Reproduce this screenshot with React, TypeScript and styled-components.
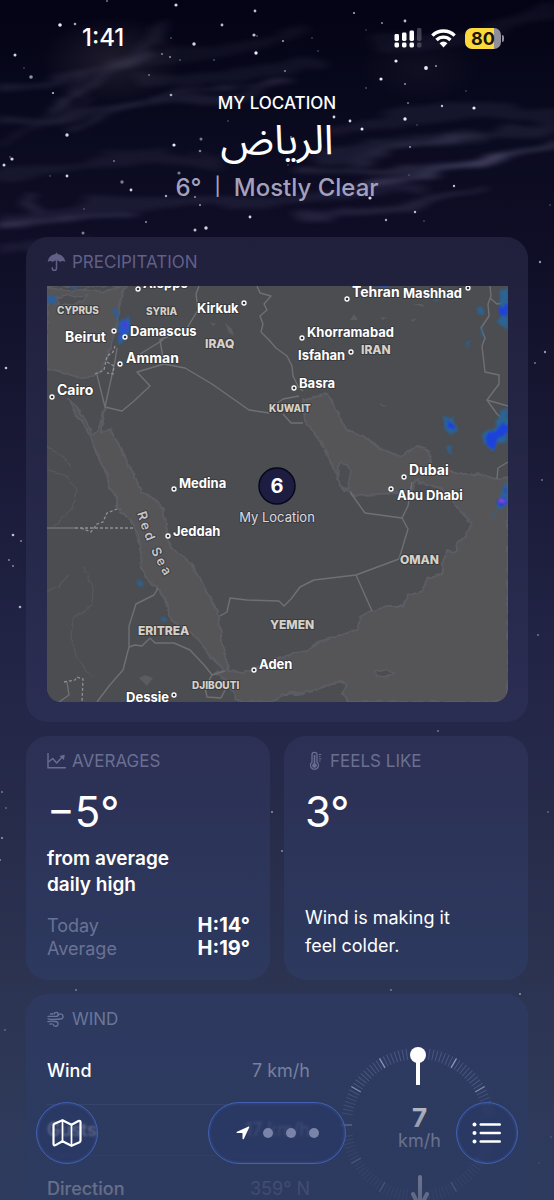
import React from "react";
import styled, { createGlobalStyle } from "styled-components";

const GlobalStyle = createGlobalStyle`
  *, *::before, *::after { box-sizing: border-box; }
  html, body { margin: 0; background: #050416; }
  body {
    font-family: Inter, "Noto Sans Arabic", "DejaVu Sans", sans-serif;
    color: #fff;
    -webkit-font-smoothing: antialiased;
  }
  h1, h2, p, dl, dd, dt { margin: 0; font-weight: inherit; }
`;

const Screen = styled.div`
  position: relative;
  height: 100vh;
  overflow: hidden;
  background: linear-gradient(
    180deg,
    #040315 0%,
    #09091e 9%,
    #0e0d25 19%,
    #171733 34%,
    #222446 54%,
    #272b4a 68%,
    #2c3553 84%,
    #303c5c 100%
  );
`;

const Sky = styled.svg`
  position: absolute;
  top: 0;
  left: 0;
  width: 100%;
  height: 100%;
`;

const Scroller = styled.main`
  position: relative;
  height: 100%;
  overflow-y: auto;
  scrollbar-width: none;
  padding: 0 26px;
`;

const StatusBar = styled.div`
  display: flex;
  justify-content: space-between;
  align-items: center;
  height: 44px;
  margin-top: 16px;
  padding: 0 24px 0 56px;
`;

const Clock = styled.time`
  font-size: 24px;
  line-height: 28px;
  font-weight: 500;
`;

const StatusIcons = styled.div`
  display: flex;
  align-items: center;
  gap: 9px;
`;

const Battery = styled.div`
  display: flex;
  align-items: center;
  gap: 1px;
`;

const BatteryBody = styled.div`
  width: 36px;
  height: 21px;
  border-radius: 7px;
  background: linear-gradient(90deg, #fbd93d 80%, #8f8e99 80%);
  color: #1a1505;
  font-size: 18px;
  line-height: 21px;
  font-weight: 700;
  text-align: center;
`;

const BatteryTip = styled.span`
  width: 2px;
  height: 7px;
  border-radius: 0 2px 2px 0;
  background: #8f8e99;
`;

const Header = styled.header`
  display: flex;
  flex-direction: column;
  align-items: center;
  padding-top: 32px;
  height: 177px;
`;

const Eyebrow = styled.p`
  font-size: 17px;
  line-height: 22px;
  font-weight: 500;
`;

const City = styled.h1`
  font-size: 41px;
  line-height: 56px;
  height: 56px;
  margin-top: -3px;
  font-weight: 400;
`;

const Summary = styled.p`
  display: flex;
  gap: 13px;
  margin-top: 4px;
  font-size: 24px;
  line-height: 34px;
  font-weight: 500;
  color: #a3a1bd;
`;

const Divider = styled.span`
  font-size: 18px;
  line-height: 32px;
`;

const Cards = styled.div`
  display: flex;
  flex-direction: column;
  gap: 14px;
  padding-bottom: 120px;
`;

const CardPair = styled.div`
  display: grid;
  grid-template-columns: 1fr 1fr;
  gap: 14px;
`;

const Card = styled.section<{ $from: string; $to: string }>`
  display: flex;
  flex-direction: column;
  padding: 13px 20px 20px 21px;
  border-radius: 22px;
  background: linear-gradient(180deg, ${(p) => p.$from}, ${(p) => p.$to});
`;

const CardTitle = styled.h2<{ $tint?: string }>`
  display: flex;
  align-items: center;
  gap: 6px;
  height: 24px;
  font-size: 17px;
  line-height: 24px;
  font-weight: 400;
  color: ${(p) => p.$tint ?? "#6a6f92"};
`;

const MapFrame = styled.div`
  margin-top: 12px;
  border-radius: 0 0 14px 14px;
  overflow: hidden;
  background: #4c4d51;
  svg { display: block; width: 100%; height: auto; }
`;

const Reading = styled.p`
  margin-top: 13px;
  font-size: 42px;
  line-height: 52px;
`;

const Statement = styled.p`
  margin-top: 8px;
  font-size: 19px;
  line-height: 26px;
  font-weight: 600;
`;

const Comparison = styled.dl`
  display: grid;
  grid-template-columns: 1fr auto;
  margin-top: 16px;
  font-size: 18px;
  line-height: 23px;
  dt { color: #6a7294; }
  dd { font-size: 20px; font-weight: 700; }
`;

const Remark = styled.p`
  margin-top: auto;
  font-size: 18px;
  line-height: 28px;
  max-width: 180px;
`;

const WindBody = styled.div`
  display: grid;
  grid-template-columns: minmax(0, 1fr) 156px;
  column-gap: 30px;
  align-items: start;
  padding-right: 12px;
`;

const WindList = styled.dl`
  margin-top: 7px;
`;

const WindRow = styled.div`
  display: flex;
  justify-content: space-between;
  align-items: center;
  height: 66px;
  font-size: 18px;
  line-height: 24px;
  &:nth-child(2) {
    height: 52px;
    border-top: 1px solid #3a4870;
    border-bottom: 1px solid #3a4870;
  }
  dt { font-weight: 500; }
  dd { color: #78809e; }
`;

const Dial = styled.div`
  position: relative;
  margin-top: 16px;
  height: 156px;
`;

const DialFace = styled.svg`
  display: block;
  width: 156px;
  height: 166px;
  overflow: visible;
`;

const DialReading = styled.p`
  position: absolute;
  inset: 58px 0 auto;
  padding-left: 3px;
  text-align: center;
  font-size: 18px;
  line-height: 20px;
  color: #bcc1d2;
`;

const DialValue = styled.strong`
  display: block;
  font-size: 26px;
  line-height: 26px;
  font-weight: 700;
  color: #fff;
`;

const BottomFade = styled.div`
  position: absolute;
  inset: auto 0 0;
  height: 118px;
  background: linear-gradient(
    180deg,
    rgba(46, 58, 94, 0) 0%,
    rgba(46, 58, 94, 0.42) 26%,
    rgba(46, 58, 94, 0.66) 60%,
    rgba(46, 58, 94, 0.76) 100%
  );
  pointer-events: none;
`;

const Toolbar = styled.nav`
  position: absolute;
  inset: auto 36px 36px;
  display: flex;
  justify-content: space-between;
`;

const GlassButton = styled.button<{ $wide?: boolean }>`
  display: flex;
  align-items: center;
  justify-content: center;
  gap: 13px;
  width: ${(p) => (p.$wide ? 138 : 62)}px;
  height: 62px;
  padding: 0;
  border: 1px solid #4261b4;
  border-radius: 31px;
  color: #fff;
  background: rgba(40, 56, 104, 0.5);
  backdrop-filter: blur(1px);
  box-shadow: inset 0 0 3px rgba(74, 108, 200, 0.55);
`;

const Dot = styled.span`
  width: 10px;
  height: 10px;
  border-radius: 50%;
  background: #7a84a8;
`;

const STARS: [number, number, number, number][] = [
  [60, 25, 1.8, 1], [75, 24, 1.3, 0.7], [176, 5, 1.6, 0.9], [107, 1, 1, 0.5], [222, 25, 1.4, 0.8],
  [255, 11, 1.4, 0.8], [254, 35, 1.6, 0.8], [257, 36, 0.8, 0.5], [194, 44, 1.7, 0.9], [256, 53, 1.7, 1],
  [283, 41, 1, 0.7], [312, 38, 0.8, 0.4], [318, 51, 0.8, 0.4], [354, 13, 1.1, 0.7], [382, 23, 1, 0.6],
  [405, 21, 1.4, 0.8], [366, 30, 0.7, 0.4], [396, 61, 1.6, 1], [426, 68, 1.9, 1], [436, 66, 1.1, 0.6],
  [381, 79, 1.6, 1], [405, 84, 1, 0.6], [366, 88, 0.8, 0.5], [285, 71, 0.9, 0.6], [171, 38, 0.8, 0.5],
  [162, 54, 0.9, 0.6], [170, 57, 1, 0.6], [180, 60, 0.8, 0.5], [214, 60, 0.8, 0.5], [149, 75, 0.9, 0.5],
  [15, 55, 1.5, 0.9], [24, 68, 0.8, 0.4], [31, 77, 1.8, 0.6], [53, 93, 1.1, 0.8], [171, 95, 1.3, 0.7],
  [334, 117, 1.4, 0.9], [350, 121, 1.4, 0.9], [362, 129, 1.5, 1], [405, 119, 1.7, 1], [408, 103, 1, 0.5],
  [442, 106, 1.2, 0.8], [474, 108, 1.6, 1], [466, 91, 0.8, 0.4], [417, 125, 0.7, 0.4], [410, 147, 1, 0.6],
  [67, 135, 1.7, 0.9], [174, 145, 1.6, 1], [201, 139, 1.5, 0.5], [200, 151, 1.3, 0.5], [228, 121, 0.8, 0.4],
  [12, 159, 1.6, 0.9], [10, 157, 0.8, 0.5], [4, 165, 1.5, 0.9], [67, 176, 1.4, 0.9], [50, 176, 0.8, 0.4],
  [114, 161, 0.9, 0.5], [122, 182, 1.7, 0.5], [131, 190, 1.4, 0.9], [179, 173, 1.6, 0.5], [166, 196, 1.2, 0.7],
  [195, 197, 1, 0.6], [200, 205, 1.1, 0.6], [84, 209, 0.8, 0.4], [83, 233, 1.5, 0.5], [146, 222, 1, 0.6],
  [206, 228, 1.7, 0.9], [195, 230, 1.5, 0.8], [250, 217, 1.4, 0.9], [370, 198, 1.6, 0.9], [454, 186, 1.2, 0.8],
  [415, 212, 1.2, 0.8], [386, 220, 1.2, 0.7], [424, 221, 0.8, 0.4], [409, 175, 0.7, 0.4], [288, 165, 0.8, 0.4],
  [550, 205, 0.8, 0.4], [291, 137, 1, 0.5], [540, 262, 1.2, 0.6], [6, 368, 1.3, 0.8], [545, 352, 1.2, 0.6],
  [13, 535, 1.3, 0.8], [21, 541, 1, 0.5], [9, 560, 1, 0.5], [13, 566, 1, 0.5], [20, 607, 1.3, 0.7],
  [535, 363, 0.9, 0.5], [542, 480, 1, 0.4], [538, 635, 1, 0.4], [438, 731, 1, 0.4], [272, 812, 1.1, 0.5],
  [282, 851, 1, 0.5], [548, 812, 1, 0.3], [2, 792, 1, 0.4], [6, 808, 1, 0.3], [2, 838, 1, 0.6], [0, 860, 1, 0.5],
  [76, 990, 1, 0.4], [5, 1030, 0.9, 0.3], [391, 990, 1, 0.4], [520, 994, 1.1, 0.5], [551, 1137, 1, 0.3],
  [539, 1163, 1, 0.25],
];

const CLOUDS: [string, number, number][] = [
  ["M0 86 C60 82 130 66 150 38 S160 28 158 42", 8, 0.13],
  ["M50 112 C90 88 110 70 148 52", 3, 0.34],
  ["M70 130 C96 122 112 112 136 100", 4, 0.24],
  ["M0 146 C30 132 60 116 90 98", 3, 0.16],
  ["M0 120 C60 128 110 96 190 100 S260 80 292 84", 8, 0.14],
  ["M150 98 C200 86 250 90 290 80", 4, 0.18],
  ["M110 60 C180 58 240 50 300 34", 12, 0.07],
  ["M140 82 C190 84 240 72 320 66", 10, 0.09],
  ["M330 132 C400 116 450 108 554 112", 14, 0.1],
  ["M320 156 C400 140 480 142 554 124", 12, 0.13],
  ["M350 160 C420 146 440 138 480 136", 6, 0.18],
  ["M370 186 C430 176 480 162 554 141", 8, 0.3],
  ["M300 172 C390 170 450 170 500 154", 8, 0.2],
  ["M0 172 C70 168 130 150 220 162", 10, 0.09],
  ["M0 220 C60 208 100 200 220 202 S320 186 420 190", 12, 0.12],
  ["M0 224 C50 226 90 214 130 216", 9, 0.24],
  ["M24 200 L40 206", 6, 0.22],
  ["M300 214 C390 218 440 196 480 186", 7, 0.18],
  ["M0 250 C40 246 60 252 90 240", 9, 0.1],
  ["M380 40 C450 50 500 20 554 12", 14, 0.08],
  ["M75 92 C72 84 80 80 82 75", 4, 0.24],
];

const NightSky = () => (
  <Sky viewBox="0 0 554 1200" preserveAspectRatio="xMidYMin slice" aria-hidden="true">
    <defs>
      <filter id="mist" filterUnits="userSpaceOnUse" x="-40" y="-20" width="640" height="320">
        <feTurbulence type="fractalNoise" baseFrequency="0.012 0.07" numOctaves="3" seed="7" result="noise" />
        <feDisplacementMap in="SourceGraphic" in2="noise" scale="20" xChannelSelector="R" yChannelSelector="G" />
        <feGaussianBlur stdDeviation="6 2" />
      </filter>
      <radialGradient id="glow">
        <stop offset="0" stopColor="#6b5f66" stopOpacity="0.24" />
        <stop offset="1" stopColor="#6b5f66" stopOpacity="0" />
      </radialGradient>
    </defs>
    <ellipse cx="112" cy="60" rx="70" ry="44" fill="url(#glow)" />
    <ellipse cx="420" cy="68" rx="60" ry="34" fill="url(#glow)" opacity="0.4" />
    <g filter="url(#mist)" opacity="0.85" fill="none" stroke="#9a98bf" strokeLinecap="round">
      {CLOUDS.map(([d, w, o]) => (
        <path key={d} d={d} strokeWidth={w} strokeOpacity={o} />
      ))}
    </g>
    <g fill="#e9ebff">
      {STARS.map(([x, y, r, o]) => (
        <circle key={`${x}-${y}`} cx={x} cy={y} r={r} opacity={o} />
      ))}
    </g>
  </Sky>
);

type City = { name: string; x: number; y: number; dot: [number, number]; size: number };

const CITIES: City[] = [
  { name: "Aleppo", x: 96, y: 2, dot: [91, 3], size: 13 },
  { name: "Kirkuk", x: 150, y: 27, dot: [197, 17], size: 13 },
  { name: "Beirut", x: 18, y: 56, dot: [67, 45], size: 14 },
  { name: "Damascus", x: 83, y: 50, dot: [78, 51], size: 13 },
  { name: "Amman", x: 79, y: 77, dot: [73, 78], size: 14 },
  { name: "Cairo", x: 10, y: 109, dot: [5, 111], size: 14 },
  { name: "Tehran", x: 305, y: 11, dot: [300, 13], size: 14 },
  { name: "Mashhad", x: 356, y: 12, dot: [421, 2], size: 13 },
  { name: "Khorramabad", x: 260, y: 51, dot: [255, 52], size: 13 },
  { name: "Isfahan", x: 251, y: 74, dot: [304, 66], size: 13 },
  { name: "Basra", x: 252, y: 102, dot: [247, 102], size: 13 },
  { name: "Medina", x: 132, y: 202, dot: [127, 203], size: 13 },
  { name: "Jeddah", x: 126, y: 250, dot: [121, 250], size: 13 },
  { name: "Dubai", x: 362, y: 189, dot: [357, 191], size: 14 },
  { name: "Abu Dhabi", x: 350, y: 214, dot: [344, 203], size: 13 },
  { name: "Aden", x: 212, y: 383, dot: [207, 384], size: 13 },
  { name: "Dessie", x: 79, y: 416, dot: [127, 409], size: 13 },
];

const COUNTRIES: [string, number, number, number][] = [
  ["CYPRUS", 10, 28, 10], ["SYRIA", 99, 29, 10], ["IRAQ", 158, 62, 12], ["IRAN", 314, 68, 12],
  ["KUWAIT", 222, 126, 10], ["OMAN", 353, 278, 12], ["YEMEN", 223, 343, 12],
  ["ERITREA", 91, 349, 12], ["DJIBOUTI", 145, 403, 10],
];

const WATER = [
  "M0 83 L12 85 23 88 33 93 46 90 55 85 61 68 65 55 70 38 72 22 75 8 80 0 H0Z",
  "M21 113 L26 122 35 138 43 148 50 168 60 188 63 202 70 212 70 222 83 233 91 248 94 265 95 285 100 293 111 302 118 315 125 335 136 342 150 353 165 372 178 385 168 387 176 392 183 402 193 416 H223 L236 408 250 408 266 405 285 398 290 395 300 398 296 408 300 416 H461 V191 L450 193 430 188 413 188 403 185 385 182 381 163 370 160 353 170 333 163 316 150 300 145 290 125 280 108 266 110 256 115 258 135 265 145 273 155 283 175 290 190 296 204 303 205 308 210 330 208 353 207 365 202 370 193 371 198 376 197 393 202 405 215 416 228 425 237 418 252 410 258 408 267 400 265 395 278 395 288 380 293 376 305 360 310 356 320 340 320 325 325 313 332 311 343 290 350 268 358 260 365 248 367 240 370 208 382 196 387 182 385 181 382 176 362 173 342 171 325 160 308 153 292 143 277 130 267 121 255 118 238 116 222 106 212 93 205 89 192 83 182 71 158 63 143 54 147 58 122 51 145 46 148 36 130 28 118Z",
];

const LAND = [
  "M8 12 L18 9 29 12 41 8 34 15 24 20 13 18Z",
  "M0 0 L10 3 24 5 40 3 58 6 74 0Z",
  "M291 182 L295 176 301 178 304 190 301 202 296 203 291 193Z",
  "M328 386 L337 384 347 387 340 391 329 390Z",
];

const BORDERS = [
  "M50 89 L58 121 68 75 70 62",
  "M58 121 L75 125 87 115 103 100 90 86 117 78 113 54 140 42 151 24 149 8 152 0",
  "M117 78 L138 82 165 98 202 124 222 127 229 118 236 113 252 110",
  "M210 0 L213 7 224 10 217 18 220 24 213 30 216 38 214 46 222 54 229 62 240 70 245 80 246 90 252 102 256 105",
  "M236 128 L244 137 256 137",
  "M93 68 L116 54",
  "M173 330 L180 326 183 312 200 314 232 315 237 320 244 313 253 301 267 294 309 289 352 273",
  "M309 289 L325 325",
  "M303 206 L318 227 355 232 361 220 365 196",
  "M355 232 L361 243 352 273",
  "M0 242 H28",
  "M111 302 L107 309 89 318 82 340 82 361 76 384 62 400 50 416",
  "M82 361 L88 359 95 360 103 352 108 357 116 357 127 357 143 364 158 380 165 389 178 385",
  "M165 389 L158 402 160 411 174 412 179 402",
  "M443 0 L444 10 441 18 442 30 434 42 438 52 435 60 438 86 452 89 452 98 440 114 450 128 461 137",
  "M443 12 L450 18 461 16", "M440 114 L461 120", "M450 193 L451 182 461 176",
  "M20 396 L22 409 12 416",
];

const FAINT = [
  "M0 185 L20 190 30 205 26 222 6 240", "M0 305 L12 300 22 290 M35 280 Q50 300 44 320 L28 330 24 350",
  "M24 350 Q30 380 46 390", "M0 8 L10 20 2 30", "M46 42 L52 48", "M0 160 L12 168 24 180",
];

const DISPUTED = [
  "M34 242 L44 246 50 238 56 236 60 227 70 223", "M28 242 H88",
  "M48 88 L57 84 60 70 66 66 68 60", "M60 76 L67 80 66 88 60 87",
  "M17 396 L28 394 30 391 36 393 35 416",
];

const RAIN: [string, string][] = [
  ["#2a5f9e", "M70 38 L82 30 84 44 76 56 70 58 73 48Z M0 10 H9 V18 H0Z M66 24 L70 22 72 30 68 32Z M22 0 H32 L28 3Z"],
  ["#2255d8", "M74 38 L80 34 82 42 76 50 72 54Z M330 0 H342 L338 6Z"],
  ["#5a35c8", "M76 38 L80 36 78 44Z"],
  ["#2a6494", "M388 6 L402 4 398 12 388 14Z M430 21 L436 20 437 29 431 29Z M452 6 L461 2 V42 L449 36 454 30Z M434 42 H437 V50 H435Z M418 57 L424 55 421 61Z M397 130 L408 133 411 146 402 148 396 138Z M437 146 L448 142 454 124 461 120 V154 L450 158 446 166 436 156Z M400 160 L406 160 404 170Z M456 198 L461 196 V220 L450 222Z M90 292 Q97 294 96 300 L92 300Z M115 330 L120 334 114 338Z M445 228 L449 228 448 232Z"],
  ["#1f42dc", "M451 22 L461 18 V30 L453 28Z M399 133 L408 138 408 145 401 142Z M440 148 L450 144 456 136 461 140 V148 L452 152 446 164 438 156Z M458 200 L461 204 456 208Z M451 216 a4 4 0 1 0 8 0 a4 4 0 1 0 -8 0Z"],
  ["#b03cd0", "M453 216 a2 2 0 1 0 4 0 a2 2 0 1 0 -4 0Z"],
];

const MapText = styled.text<{ $tone?: string; $weight?: number }>`
  font-weight: ${(p) => p.$weight ?? 700};
  fill: ${(p) => p.$tone ?? "#fff"};
  paint-order: stroke;
  stroke: #3b3c40;
  stroke-width: 2px;
  stroke-linejoin: round;
`;

const PrecipitationMap = () => (
  <svg viewBox="0 0 461 416" role="img" aria-label="Precipitation map">
    <defs>
      <filter id="rain" x="-10%" y="-10%" width="120%" height="120%">
        <feTurbulence type="fractalNoise" baseFrequency="0.15" numOctaves="2" seed="3" result="noise" />
        <feDisplacementMap in="SourceGraphic" in2="noise" scale="6" xChannelSelector="R" yChannelSelector="G" />
        <feGaussianBlur stdDeviation="1" />
      </filter>
      <filter id="coast" x="-2%" y="-2%" width="104%" height="104%">
        <feTurbulence type="fractalNoise" baseFrequency="0.12" numOctaves="2" seed="5" result="noise" />
        <feDisplacementMap in="SourceGraphic" in2="noise" scale="5" xChannelSelector="R" yChannelSelector="G" />
      </filter>
    </defs>
    <rect width="461" height="416" fill="#4c4d51" />
    <g filter="url(#coast)">
      <g fill="#545559" stroke="#5c5c64" strokeWidth="2" strokeLinejoin="round">
        {WATER.map((d) => <path key={d} d={d} />)}
      </g>
      <g fill="#4c4d51" stroke="#5c5c64" strokeWidth="1.5" strokeLinejoin="round">
        {LAND.map((d) => <path key={d} d={d} />)}
      </g>
      <g fill="none" stroke="#57585c" strokeWidth="1.2">
        {FAINT.map((d) => <path key={d} d={d} />)}
      </g>
    </g>
    <g fill="none" stroke="#6f7074" strokeWidth="1.4" strokeLinejoin="round">
      {BORDERS.map((d) => <path key={d} d={d} />)}
    </g>
    <g fill="none" stroke="#909094" strokeWidth="1.3" strokeDasharray="3 2">
      {DISPUTED.map((d) => <path key={d} d={d} />)}
    </g>
    <g fill="#5b5c60">
      <path d="M303 34l4-6 4 6zM334 31l6 1-5 2zM366 18h9l3 3zM364 34l6-2-4 4zM332 117l9 4-6-1zM178 37l4 10 5 3-2-7zM92 392l6-3 8 3-6 8zM163 36l6 2-3 2z" />
    </g>
    <g filter="url(#rain)">
      {RAIN.map(([fill, d]) => <path key={d} d={d} fill={fill} />)}
    </g>
    {COUNTRIES.map(([name, x, y, size]) => (
      <MapText key={name} x={x} y={y} fontSize={size} $tone="#d5d1c8" $weight={800}>
        {name}
      </MapText>
    ))}
    {CITIES.map((c) => (
      <g key={c.name}>
        <circle cx={c.dot[0]} cy={c.dot[1]} r="2" fill="#333438" stroke="#fff" strokeWidth="1.3" />
        <MapText x={c.x} y={c.y} fontSize={c.size}>{c.name}</MapText>
      </g>
    ))}
    <path id="redsea" d="M90 227 Q100 262 120 294" fill="none" />
    <MapText fontSize="13" letterSpacing="3" $tone="#c4c4c8" $weight={600}>
      <textPath href="#redsea">Red Sea</textPath>
    </MapText>
    <circle cx="230" cy="200" r="18" fill="#1c1d40" stroke="#07071a" strokeWidth="1.5" />
    <text x="230" y="207" fontSize="20" fontWeight="700" fill="#fff" textAnchor="middle">6</text>
    <MapText x="230" y="236" fontSize="13" textAnchor="middle" $tone="#d9dae0" $weight={400}>
      My Location
    </MapText>
  </svg>
);

const SignalIcon = () => (
  <svg width="28" height="20" viewBox="0 0 28 20" fill="#fff" aria-label="Cellular signal">
    <rect x="0.5" y="6" width="4.500" height="7" rx="1.4" />
    <rect x="8" y="4.500" width="4.500" height="8.500" rx="1.4" />
    <rect x="15.500" y="2.500" width="4.500" height="10.500" rx="1.4" />
    <rect x="23" y="0" width="4.500" height="13" rx="1.4" opacity="0.22" />
    <rect x="0.5" y="14.500" width="4.500" height="5" rx="1.4" />
    <rect x="8" y="14.500" width="4.500" height="5" rx="1.4" />
    <rect x="15.500" y="14.500" width="4.500" height="5" rx="1.4" />
    <rect x="23" y="14.500" width="4.500" height="5" rx="1.4" opacity="0.22" />
  </svg>
);

const WifiIcon = () => (
  <svg width="25" height="20" viewBox="0 0 24 19" aria-label="Wi-Fi">
    <g fill="none" stroke="#fff" strokeWidth="3.200">
      <path d="M1.300 7.200a15.200 15.200 0 0 1 21.400 0" />
      <path d="M5.300 11.400a9.500 9.500 0 0 1 13.400 0" />
    </g>
    <path d="M12 18.500l-3.800-4a5.400 5.400 0 0 1 7.600 0z" fill="#fff" />
  </svg>
);

const UmbrellaIcon = () => (
  <svg width="19" height="20" viewBox="0 0 19 20" aria-hidden="true">
    <path d="M9.500 0.500c.5 0 .8.400.8.900v.5c4.300.4 7.500 3.600 8 8.100-1.600-1.500-3.700-1.500-5 .1-.9-1-1.900-1.500-3-1.600v-.1H8.700v.1c-1.100.1-2.100.6-3 1.600-1.300-1.600-3.400-1.600-5-.1.5-4.500 3.700-7.700 8-8.100v-.5c0-.5.3-.9.800-.9z" fill="currentColor" />
    <path d="M9.500 8v8.200a2.100 2.100 0 0 1-4.200 0v-.5" fill="none" stroke="currentColor" strokeWidth="1.500" strokeLinecap="round" />
  </svg>
);

const ChartIcon = () => (
  <svg width="19" height="16" viewBox="0 0 19 16" fill="none" stroke="currentColor" strokeWidth="1.400" aria-hidden="true">
    <path d="M1 .5v14.300h17.500" strokeLinecap="round" />
    <path d="M1.500 9l4.200-3.500 4 4.500 5.500-6" strokeLinejoin="round" />
    <path d="M12.500 3l5.300-1.200-.9 5.300z" fill="currentColor" stroke="none" />
  </svg>
);

const ThermometerIcon = () => (
  <svg width="19" height="20" viewBox="0 0 19 20" fill="none" stroke="currentColor" strokeWidth="1.300" aria-hidden="true">
    <path d="M7 11.200V3.800a2.500 2.500 0 0 1 5 0v7.400a4 4 0 1 1-5 0z" />
    <circle cx="9.500" cy="14.500" r="1.700" fill="currentColor" />
    <path d="M9.500 4.500v8" strokeWidth="1.600" strokeLinecap="round" />
    <path d="M13.800 3.500h2.500M13.800 5.700h1.700M13.800 7.900h2.500M13.800 10.100h1.700" strokeWidth="1" />
  </svg>
);

const WindIcon = () => (
  <svg width="19" height="16" viewBox="0 0 19 16" fill="none" stroke="currentColor" strokeWidth="1.300" strokeLinecap="round" aria-hidden="true">
    <path d="M1 5.300h8.200a2 2 0 1 0-2-2.200" />
    <path d="M1 7.800c4 .9 8 .8 12.500.2a2.500 2.500 0 1 0-2.300-3.400" />
    <path d="M3.500 2.800c1 .4 1.600.3 2.500-.1" />
    <path d="M1 10.700c3-.9 5.500-.6 7.500-.2a2.400 2.400 0 1 1-2.200 2.900M3 13.100c.8-.4 1.200-.4 2-.2" />
  </svg>
);

const MapIcon = () => (
  <svg width="30" height="28" viewBox="0 0 30 28" fill="none" stroke="#fff" strokeWidth="2.200" strokeLinejoin="round" aria-hidden="true">
    <path d="M1.500 6.500c0-.8.300-1.300 1-1.700L10.500 1.200l9 4.600 7-3.800c1.100-.6 2-.1 2 1.100v18.400c0 .8-.3 1.300-1 1.700l-8 3.600-9-4.600-7 3.900c-1.100.6-2 .1-2-1.100z" />
    <path d="M10.500 1.500v20.500M19.500 6v20.500" strokeWidth="1.700" />
  </svg>
);

const LocationArrow = () => (
  <svg width="14" height="14" viewBox="0 0 14 14" aria-hidden="true">
    <path d="M12.600.6L1 5.700c-.8.400-.6 1.400.3 1.400h4.900c.2 0 .3.100.3.300v5c0 .9 1 1.100 1.400.3L13.300 1.300c.2-.5-.2-.9-.7-.7z" fill="#fff" />
  </svg>
);

const ListIcon = () => (
  <svg width="30" height="22" viewBox="0 0 30 22" fill="#fff" aria-hidden="true">
    {[2.5, 11, 19.5].map((y) => (
      <g key={y}>
        <circle cx="2.500" cy={y} r="2" />
        <rect x="7.500" y={y - 1.2} width="21.500" height="2.400" rx="1.200" />
      </g>
    ))}
  </svg>
);

const TICKS = Array.from({ length: 120 }, (_, i) => i * 3).filter((a) => {
  const near = Math.min(a % 90, 90 - (a % 90));
  return near > 6 || a === 270;
});

const Compass = () => (
  <DialFace viewBox="0 0 156 166" aria-hidden="true">
    {TICKS.map((a) => (
      <line
        key={a}
        x1="78"
        y1="1"
        x2="78"
        y2="12"
        stroke={a % 30 === 0 ? "#8793b4" : "#495780"}
        strokeWidth={a % 30 === 0 ? 1.4 : 1}
        transform={`rotate(${a} 78 78)`}
      />
    ))}
    <path d="M78 8v30" stroke="#fff" strokeWidth="4" />
    <circle cx="78" cy="8" r="8" fill="#fff" />
    <path d="M80 130v24M73 147l7 14 7-14" stroke="#fff" strokeWidth="4" fill="none" strokeLinecap="round" />
  </DialFace>
);

export default function App() {
  return (
    <Screen>
      <GlobalStyle />
      <NightSky />
      <Scroller>
        <StatusBar>
          <Clock>1:41</Clock>
          <StatusIcons>
            <SignalIcon />
            <WifiIcon />
            <Battery>
              <BatteryBody>80</BatteryBody>
              <BatteryTip />
            </Battery>
          </StatusIcons>
        </StatusBar>
        <Header>
          <Eyebrow>MY LOCATION</Eyebrow>
          <City lang="ar" dir="rtl">الرياض</City>
          <Summary>
            <span>6°</span>
            <Divider>|</Divider>
            <span>Mostly Clear</span>
          </Summary>
        </Header>
        <Cards>
          <Card $from="#20203c" $to="#2b2e53">
            <CardTitle $tint="#615f85"><UmbrellaIcon />PRECIPITATION</CardTitle>
            <MapFrame><PrecipitationMap /></MapFrame>
          </Card>
          <CardPair>
            <Card $from="#2c3054" $to="#2d395f">
              <CardTitle><ChartIcon />AVERAGES</CardTitle>
              <Reading>−5°</Reading>
              <Statement>from average<br />daily high</Statement>
              <Comparison>
                <dt>Today</dt><dd>H:14°</dd>
                <dt>Average</dt><dd>H:19°</dd>
              </Comparison>
            </Card>
            <Card $from="#2c3054" $to="#2d395f">
              <CardTitle><ThermometerIcon />FEELS LIKE</CardTitle>
              <Reading>3°</Reading>
              <Remark>Wind is making it feel colder.</Remark>
            </Card>
          </CardPair>
          <Card $from="#2d395f" $to="#2e3c64">
            <CardTitle $tint="#6a7699"><WindIcon />WIND</CardTitle>
            <WindBody>
              <WindList>
                <WindRow><dt>Wind</dt><dd>7 km/h</dd></WindRow>
                <WindRow><dt>Gusts</dt><dd>17 km/h</dd></WindRow>
                <WindRow><dt>Direction</dt><dd>359° N</dd></WindRow>
              </WindList>
              <Dial>
                <Compass />
                <DialReading><DialValue>7</DialValue>km/h</DialReading>
              </Dial>
            </WindBody>
          </Card>
        </Cards>
      </Scroller>
      <BottomFade />
      <Toolbar aria-label="Weather views">
        <GlassButton type="button" aria-label="Map"><MapIcon /></GlassButton>
        <GlassButton type="button" $wide aria-label="Locations">
          <LocationArrow /><Dot /><Dot /><Dot />
        </GlassButton>
        <GlassButton type="button" aria-label="List"><ListIcon /></GlassButton>
      </Toolbar>
    </Screen>
  );
}
